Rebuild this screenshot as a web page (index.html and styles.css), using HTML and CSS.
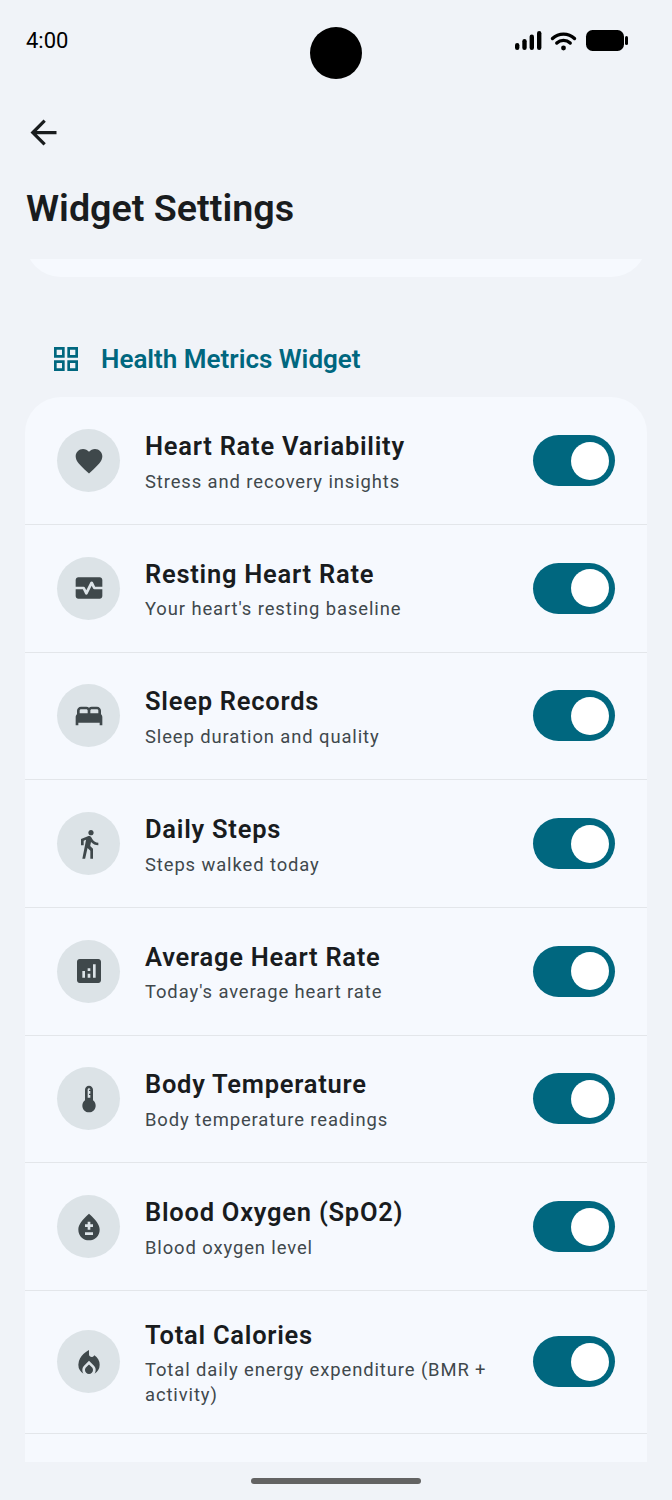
FILE: index.html
```html
<!DOCTYPE html>
<html lang="en">
<head>
    <meta charset="UTF-8">
    <meta name="viewport" content="width=device-width, initial-scale=1.0">
    <title>Widget Settings</title>
    <link rel="stylesheet" href="styles.css">
</head>
<body>
    <div class="status-bar">
        <span class="status-time">4:00</span>
        <div class="camera"></div>
        <svg class="status-icons" width="113" height="21" viewBox="0 0 113 21">
            <rect x="0" y="13" width="4.4" height="7" rx="2.2"/>
            <rect x="7.3" y="9" width="4.4" height="11" rx="2.2"/>
            <rect x="14.6" y="4.5" width="4.4" height="15.5" rx="2.2"/>
            <rect x="22" y="1" width="4.4" height="19" rx="2.2"/>
            <path d="M37.5 8.5a16 16 0 0 1 22 0M41.8 13a10 10 0 0 1 13.4 0" fill="none" stroke="#000" stroke-width="3.4" stroke-linecap="round"/>
            <circle cx="48.5" cy="18" r="2.4"/>
            <rect x="71" y="0" width="38" height="21" rx="6.5"/>
            <rect x="110" y="6" width="3" height="9" rx="1.5"/>
        </svg>
    </div>

    <button class="back-button" aria-label="Back">
        <svg width="39" height="39" viewBox="0 0 24 24"><path d="M20 11H7.83l5.59-5.59L12 4l-8 8 8 8 1.41-1.41L7.83 13H20v-2z"/></svg>
    </button>
    <h1>Widget Settings</h1>

    <div class="scroll-area">
        <div class="card-end"></div>

        <div class="section-title">
            <svg width="32" height="32" viewBox="0 0 24 24"><path d="M3 3v8h8V3H3zm6 6H5V5h4v4zm-6 4v8h8v-8H3zm6 6H5v-4h4v4zm4-16v8h8V3h-8zm6 6h-4V5h4v4zm-6 4v8h8v-8h-8zm6 6h-4v-4h4v4z"/></svg>
            <h2>Health Metrics Widget</h2>
        </div>

        <div class="card">
            <div class="row">
                <div class="row-icon"><svg width="32" height="32" viewBox="0 0 24 24"><path d="M12 21.35l-1.45-1.32C5.4 15.36 2 12.28 2 8.5 2 5.42 4.42 3 7.5 3c1.74 0 3.41.81 4.5 2.09C13.09 3.81 14.76 3 16.5 3 19.58 3 22 5.42 22 8.5c0 3.78-3.4 6.86-8.55 11.54L12 21.35z"/></svg></div>
                <div class="row-text">
                    <div class="row-title">Heart Rate Variability</div>
                    <div class="row-sub">Stress and recovery insights</div>
                </div>
                <div class="toggle"><div class="thumb"></div></div>
            </div>
            <div class="row">
                <div class="row-icon"><svg width="32" height="32" viewBox="0 0 24 24"><path d="M15.11 12.45L14 10.24l-3.11 6.21c-.16.34-.51.55-.89.55s-.73-.21-.89-.55L7.38 13H2v5c0 1.1.9 2 2 2h16c1.1 0 2-.9 2-2v-5h-6c-.38 0-.73-.21-.89-.55z"/><path d="M20 4H4c-1.1 0-2 .9-2 2v5h6c.38 0 .73.21.89.55L10 13.76l3.11-6.21c.34-.68 1.45-.68 1.79 0L16.62 11H22V6c0-1.1-.9-2-2-2z"/></svg></div>
                <div class="row-text">
                    <div class="row-title">Resting Heart Rate</div>
                    <div class="row-sub">Your heart's resting baseline</div>
                </div>
                <div class="toggle"><div class="thumb"></div></div>
            </div>
            <div class="row">
                <div class="row-icon"><svg width="32" height="32" viewBox="0 0 24 24"><path d="M21 10.78V8c0-1.65-1.35-3-3-3h-4c-.77 0-1.47.3-2 .78-.53-.48-1.23-.78-2-.78H6C4.35 5 3 6.35 3 8v2.78c-.61.55-1 1.34-1 2.22v6h2v-2h16v2h2v-6c0-.88-.39-1.67-1-2.22zM14 7h4c.55 0 1 .45 1 1v2h-6V8c0-.55.45-1 1-1zM5 8c0-.55.45-1 1-1h4c.55 0 1 .45 1 1v2H5V8z"/></svg></div>
                <div class="row-text">
                    <div class="row-title">Sleep Records</div>
                    <div class="row-sub">Sleep duration and quality</div>
                </div>
                <div class="toggle"><div class="thumb"></div></div>
            </div>
            <div class="row">
                <div class="row-icon"><svg width="32" height="32" viewBox="0 0 24 24"><path d="M13.5 5.5c1.1 0 2-.9 2-2s-.9-2-2-2-2 .9-2 2 .9 2 2 2zM9.8 8.9L7 23h2.1l1.8-8 2.1 2v6h2v-7.5l-2.1-2 .6-3C14.8 12 16.8 13 19 13v-2c-1.9 0-3.5-1-4.3-2.4l-1-1.6c-.4-.6-1-1-1.7-1-.3 0-.5.1-.8.1L6 8.3V13h2V9.6l1.8-.7"/></svg></div>
                <div class="row-text">
                    <div class="row-title">Daily Steps</div>
                    <div class="row-sub">Steps walked today</div>
                </div>
                <div class="toggle"><div class="thumb"></div></div>
            </div>
            <div class="row">
                <div class="row-icon"><svg width="32" height="32" viewBox="0 0 24 24"><path d="M19 3H5c-1.1 0-2 .9-2 2v14c0 1.1.9 2 2 2h14c1.1 0 2-.9 2-2V5c0-1.1-.9-2-2-2zM9 17H7v-5h2v5zm4 0h-2v-3h2v3zm0-5h-2v-2h2v2zm4 5h-2V7h2v10z"/></svg></div>
                <div class="row-text">
                    <div class="row-title">Average Heart Rate</div>
                    <div class="row-sub">Today's average heart rate</div>
                </div>
                <div class="toggle"><div class="thumb"></div></div>
            </div>
            <div class="row">
                <div class="row-icon"><svg width="32" height="32" viewBox="0 0 24 24"><path d="M15 13V5c0-1.66-1.34-3-3-3S9 3.34 9 5v8c-1.21.91-2 2.37-2 4 0 2.76 2.24 5 5 5s5-2.24 5-5c0-1.63-.79-3.09-2-4zm-4-8c0-.55.45-1 1-1s1 .45 1 1h-1v1h1v2h-1v1h1v2h-2V5z"/></svg></div>
                <div class="row-text">
                    <div class="row-title">Body Temperature</div>
                    <div class="row-sub">Body temperature readings</div>
                </div>
                <div class="toggle"><div class="thumb"></div></div>
            </div>
            <div class="row">
                <div class="row-icon"><svg width="32" height="32" viewBox="0 0 24 24"><path fill-rule="evenodd" d="M12 2c-5.33 4.55-8 8.48-8 11.8 0 4.98 3.8 8.2 8 8.2s8-3.22 8-8.2C20 10.48 17.33 6.55 12 2zM15 18H9v-2h6v2zM15 12h-2v2h-2v-2H9v-2h2V8h2v2h2v2z"/></svg></div>
                <div class="row-text">
                    <div class="row-title">Blood Oxygen (SpO2)</div>
                    <div class="row-sub">Blood oxygen level</div>
                </div>
                <div class="toggle"><div class="thumb"></div></div>
            </div>
            <div class="row">
                <div class="row-icon"><svg width="32" height="32" viewBox="0 -960 960 960"><path d="M160-400q0-105 50-187t110-138q60-56 110-85.5l50-29.5v132q0 37 25 58.5t56 21.5q17 0 32.5-7t28.5-23l18-22q72 42 116 116.5T800-400q0 88-43 160.5T644-125q17-24 26.5-52.5T680-238q0-40-15-75.5T622-377L480-516 339-377q-29 29-44 64t-15 75q0 32 9.5 60.5T316-125q-70-42-113-114.5T160-400Zm320-4 85 83q17 17 26 38t9 45q0 49-35 84t-85 35q-50 0-85-35t-35-84q0-23 9-44.5t26-38.5l85-83Z"/></svg></div>
                <div class="row-text">
                    <div class="row-title">Total Calories</div>
                    <div class="row-sub">Total daily energy expenditure (BMR + activity)</div>
                </div>
                <div class="toggle"><div class="thumb"></div></div>
            </div>
            <div class="row"></div>
        </div>
    </div>

    <div class="home-bar"><div class="home-pill"></div></div>
</body>
</html>
```

FILE: styles.css
```css
body {
    font-family: Roboto, "Liberation Sans", sans-serif;
    background-color: #f0f3f8;
    color: #191c1e;
    margin: 0;
    padding: 0;
    height: 1500px;
    overflow: hidden;
    display: flex;
    flex-direction: column;
}
.status-bar {
    display: grid;
    grid-template-columns: 1fr 52px 1fr;
    height: 113px;
    padding: 0 26px;
    box-sizing: border-box;
    align-items: start;
}
.status-time {
    font-size: 22px;
    line-height: 26px;
    margin-top: 28px;
    color: #000;
}
.camera {
    width: 52px;
    height: 52px;
    margin-top: 27px;
    border-radius: 50%;
    background-color: #000;
}
.status-icons {
    justify-self: end;
    margin: 30px 18px 0 0;
}
.back-button {
    width: 39px;
    height: 39px;
    margin-left: 24px;
    padding: 0;
    border: none;
    background: none;
    fill: #191c1e;
}
h1 {
    font-size: 37.7px;
    line-height: 46px;
    font-weight: 600;
    margin: 33px 0 28px 26px;
}
.scroll-area {
    height: 1203px;
    overflow: hidden;
    padding: 0 25px;
}
.card-end {
    height: 40px;
    margin-top: -22px;
    background-color: #f6f9fe;
    border-radius: 0 0 36px 36px;
}
.section-title {
    display: flex;
    align-items: center;
    gap: 19px;
    height: 32px;
    margin: 66px 0 22.3px 25px;
    fill: #00677f;
}
h2 {
    font-size: 26px;
    font-weight: 600;
    color: #00677f;
    margin: 0;
}
.card {
    background-color: #f6f9fe;
    border-radius: 36px 36px 0 0;
}
.row {
    display: flex;
    align-items: center;
    min-height: 78.67px;
    padding: 24px 32px;
    border-bottom: 1px solid #e3e6ea;
}
.row-icon {
    flex: none;
    width: 63px;
    height: 63px;
    border-radius: 50%;
    background-color: #dce3e7;
    fill: #3f484b;
    display: flex;
    align-items: center;
    justify-content: center;
}
.row-text {
    flex: 1;
    margin: 0 26px 0 25px;
    padding: 4px 0 1.5px;
}
.row-title {
    font-size: 25.5px;
    line-height: 33px;
    font-weight: 600;
    letter-spacing: 0.75px;
    margin-bottom: 5.5px;
}
.row-sub {
    font-size: 18.4px;
    line-height: 25px;
    letter-spacing: 0.9px;
    color: #40484c;
}
.toggle {
    flex: none;
    width: 82px;
    height: 51px;
    padding: 0 6px;
    box-sizing: border-box;
    border-radius: 26px;
    background-color: #00677f;
    display: flex;
    align-items: center;
    justify-content: flex-end;
}
.thumb {
    width: 38px;
    height: 38px;
    border-radius: 50%;
    background-color: #fff;
}
.home-bar {
    display: flex;
    justify-content: center;
    padding-top: 16px;
}
.home-pill {
    width: 170px;
    height: 6px;
    border-radius: 3px;
    background-color: #636363;
}
```
